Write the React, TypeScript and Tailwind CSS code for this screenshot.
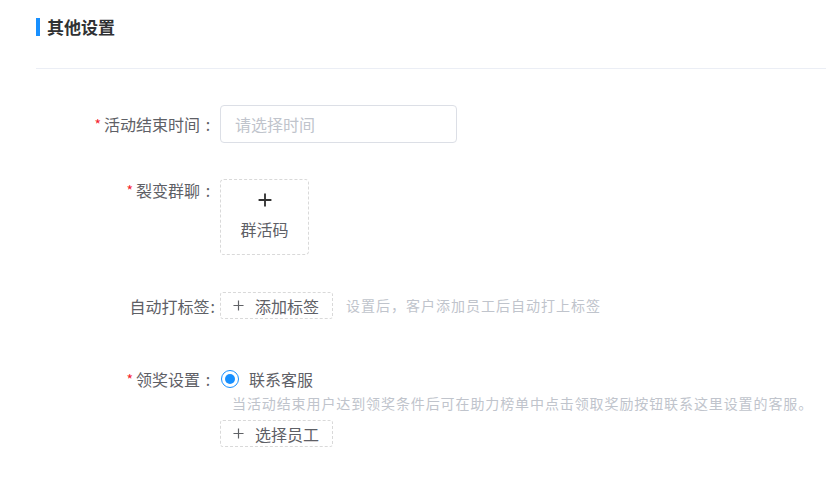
import React from "react";

const font = { fontFamily: '"Noto Sans CJK SC", "Noto Sans", sans-serif' };

function Plus({ size = 12, color = "#606266", w = 1.3 }: { size?: number; color?: string; w?: number }) {
  return (
    <svg width={size} height={size} viewBox="0 0 12 12" className="shrink-0">
      <path d="M6 0.5V11.5M0.5 6H11.5" stroke={color} strokeWidth={w} fill="none" />
    </svg>
  );
}

function Label({ text, required, wide = true }: { text: string; required?: boolean; wide?: boolean }) {
  return (
    <div className="w-[180px] shrink-0 flex items-center justify-end text-[16px] leading-[22px] text-[#5e6066]">
      {required && <span className="text-[#f5222d] text-[14px] mr-[3px] leading-[14px]">*</span>}
      <span>{text}</span>
      {wide ? (
        <span className="w-[16px] text-center">:</span>
      ) : (
        <span className="ml-[1px] mr-[1px]">:</span>
      )}
    </div>
  );
}

export default function App() {
  return (
    <div className="w-[826px] h-[477px] bg-white overflow-hidden pl-[36px]" style={font}>
      <div className="h-[69px] border-b border-[#ebeef5] pt-[16px] box-border">
        <div className="flex items-center h-[22px]">
          <div className="w-[4px] h-[18px] bg-[#1890ff]" />
          <div className="ml-[7px] text-[17px] font-bold text-[#303133] leading-[22px]">其他设置</div>
        </div>
      </div>

      <div className="flex items-center mt-[36px] h-[38px] gap-[4px]">
        <Label text="活动结束时间" required />
        <div className="w-[237px] h-[38px] border border-[#dcdfe6] rounded-[4px] flex items-center pl-[14px] text-[16px] text-[#c0c4cc]">
          请选择时间
        </div>
      </div>

      <div className="flex items-start mt-[36px] gap-[4px]">
        <Label text="裂变群聊" required />
        <div className="w-[89px] h-[76px] border border-dashed border-[#d9d9d9] rounded-[4px] flex flex-col items-center pt-[13px]">
          <Plus size={14} color="#333333" w={1.6} />
          <div className="mt-[11px] text-[16px] leading-[22px] text-[#5e6066]">群活码</div>
        </div>
      </div>

      <div className="flex items-center mt-[37px] h-[27px] gap-[4px]">
        <Label text="自动打标签" wide={false} />
        <div className="w-[113px] h-[27px] border border-dashed border-[#d9d9d9] rounded-[3px] flex items-center pl-[12px] text-[16px] text-[#5e6066]">
          <Plus size={11} />
          <span className="ml-[11px]">添加标签</span>
        </div>
        <div className="ml-[9px] text-[14px] tracking-[1px] text-[#c0c4cc]">设置后，客户添加员工后自动打上标签</div>
      </div>

      <div className="flex items-start mt-[49px] gap-[4px]">
        <Label text="领奖设置" required />
        <div className="flex flex-col">
          <div className="flex items-center h-[22px]">
            <div className="w-[18px] h-[18px] rounded-full border-[1.5px] border-[#1890ff] flex items-center justify-center ml-[1px]">
              <div className="w-[10px] h-[10px] rounded-full bg-[#1890ff]" />
            </div>
            <span className="ml-[10px] text-[16px] text-[#5e6066] leading-[22px]">联系客服</span>
          </div>
          <div className="mt-[3px] pl-[12px] text-[14px] tracking-[0.9px] leading-[20px] text-[#c0c4cc] whitespace-nowrap">
            当活动结束用户达到领奖条件后可在助力榜单中点击领取奖励按钮联系这里设置的客服。
          </div>
          <div className="mt-[7px] w-[113px] h-[27px] border border-dashed border-[#d9d9d9] rounded-[3px] flex items-center pl-[12px] text-[16px] text-[#5e6066]">
            <Plus size={11} />
            <span className="ml-[11px]">选择员工</span>
          </div>
        </div>
      </div>
    </div>
  );
}
